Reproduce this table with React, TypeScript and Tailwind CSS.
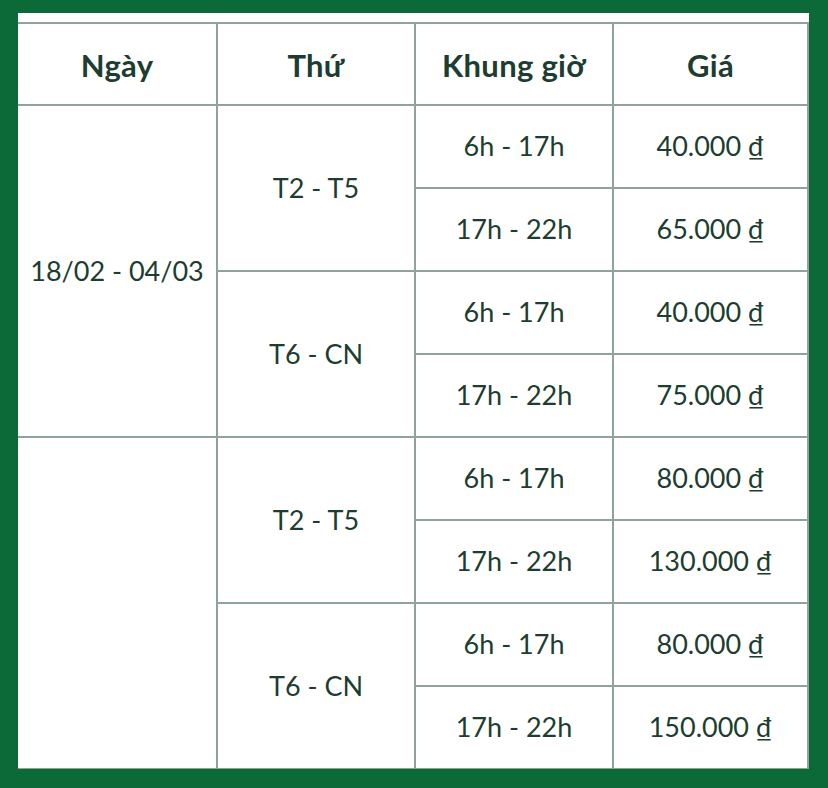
import React from 'react'

type Slot = { gio: string; gia: string }
type Nhom = { thu: string; slots: Slot[] }
type Dot = { ngay: string; nhom: Nhom[] }

const bangGia: Dot[] = [
  {
    ngay: '18/02 - 04/03',
    nhom: [
      { thu: 'T2 - T5', slots: [{ gio: '6h - 17h', gia: '40.000' }, { gio: '17h - 22h', gia: '65.000' }] },
      { thu: 'T6 - CN', slots: [{ gio: '6h - 17h', gia: '40.000' }, { gio: '17h - 22h', gia: '75.000' }] },
    ],
  },
  {
    ngay: '',
    nhom: [
      { thu: 'T2 - T5', slots: [{ gio: '6h - 17h', gia: '80.000' }, { gio: '17h - 22h', gia: '130.000' }] },
      { thu: 'T6 - CN', slots: [{ gio: '6h - 17h', gia: '80.000' }, { gio: '17h - 22h', gia: '150.000' }] },
    ],
  },
]

const cell = 'bg-white flex items-center justify-center text-[#1c3d2f]'

export default function App() {
  const cells: React.ReactNode[] = []
  let row = 2

  bangGia.forEach((dot, di) => {
    const span = dot.nhom.reduce((n, g) => n + g.slots.length, 0)
    cells.push(
      <div key={`d${di}`} className={cell} style={{ gridColumn: 1, gridRow: `${row} / span ${span}` }}>
        {dot.ngay}
      </div>
    )
    dot.nhom.forEach((g, gi) => {
      cells.push(
        <div key={`t${di}${gi}`} className={cell} style={{ gridColumn: 2, gridRow: `${row} / span ${g.slots.length}` }}>
          {g.thu}
        </div>
      )
      g.slots.forEach((s, si) => {
        cells.push(
          <div key={`g${di}${gi}${si}`} className={cell} style={{ gridColumn: 3, gridRow: row }}>
            {s.gio}
          </div>
        )
        cells.push(
          <div key={`p${di}${gi}${si}`} className={cell} style={{ gridColumn: 4, gridRow: row }}>
            {s.gia} ₫
          </div>
        )
        row++
      })
    })
  })

  return (
    <div className="min-h-screen w-[828px] h-[788px] bg-[#0b6a37] pl-[18px] pt-[13px] pr-[19px] pb-[19px] font-['Lato',sans-serif]">
      <div className="h-[756px] w-[791px] bg-white pt-[9px]">
        <div className="grid grid-cols-[198px_196px_196px_193px] grid-rows-[80px_repeat(8,81px)] gap-[2px] bg-[#8fa39a] pt-[2px] pr-[2px] pb-[1px] text-[27px]">
          {['Ngày', 'Thứ', 'Khung giờ', 'Giá'].map((h) => (
            <div key={h} className={`${cell} pt-[3px] text-[31px] font-bold tracking-[0.3px] text-[#0f3a25]`}>
              {h}
            </div>
          ))}
          {cells}
        </div>
      </div>
    </div>
  )
}
